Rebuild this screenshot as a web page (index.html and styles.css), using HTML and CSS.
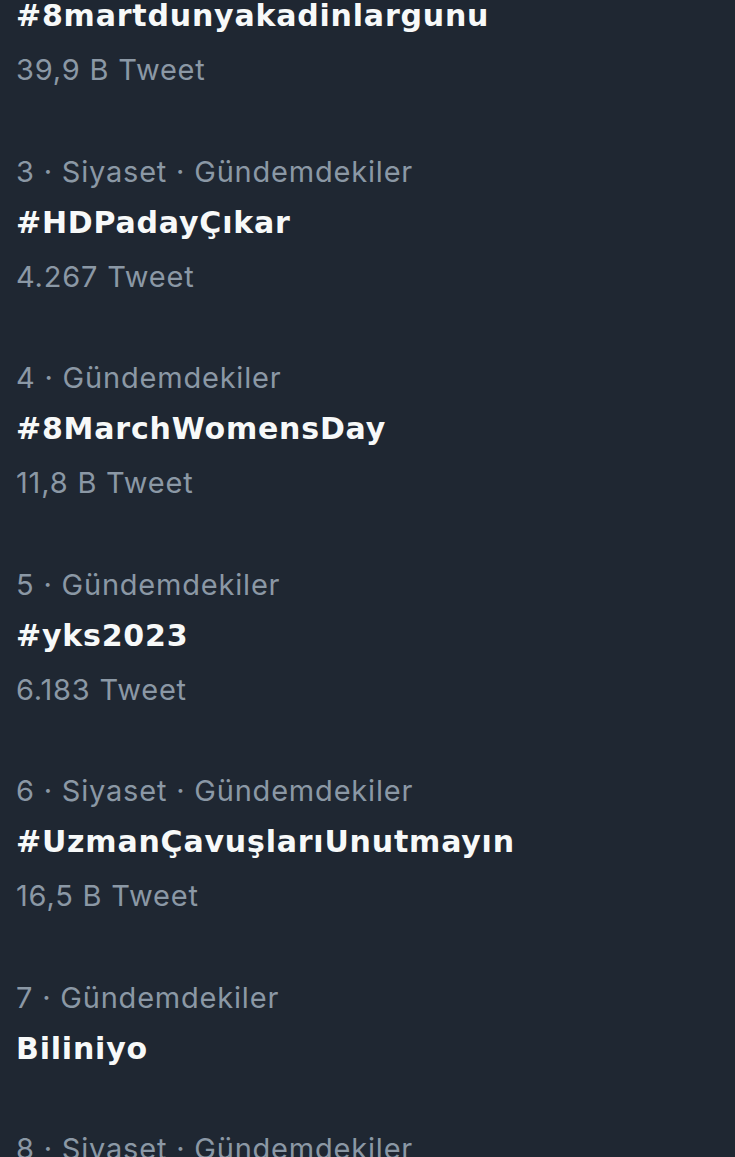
FILE: index.html
```html
<!DOCTYPE html>
<html lang="tr">
<head>
<meta charset="utf-8">
<title>Gündem</title>
<link rel="stylesheet" href="styles.css">
</head>
<body>
<main class="trends">
  <section class="trend">
    <div class="meta">2 · Gündemdekiler</div>
    <div class="title">#8martdunyakadinlargunu</div>
    <div class="count">39,9 B Tweet</div>
  </section>
  <section class="trend">
    <div class="meta">3 · Siyaset · Gündemdekiler</div>
    <div class="title">#HDPadayÇıkar</div>
    <div class="count">4.267 Tweet</div>
  </section>
  <section class="trend">
    <div class="meta">4 · Gündemdekiler</div>
    <div class="title">#8MarchWomensDay</div>
    <div class="count">11,8 B Tweet</div>
  </section>
  <section class="trend">
    <div class="meta">5 · Gündemdekiler</div>
    <div class="title">#yks2023</div>
    <div class="count">6.183 Tweet</div>
  </section>
  <section class="trend">
    <div class="meta">6 · Siyaset · Gündemdekiler</div>
    <div class="title">#UzmanÇavuşlarıUnutmayın</div>
    <div class="count">16,5 B Tweet</div>
  </section>
  <section class="trend">
    <div class="meta">7 · Gündemdekiler</div>
    <div class="title">Biliniyo</div>
  </section>
  <section class="trend">
    <div class="meta">8 · Siyaset · Gündemdekiler</div>
    <div class="title">#Gündem</div>
    <div class="count">10 B Tweet</div>
  </section>
</main>
</body>
</html>
```

FILE: styles.css
```css
html, body {
  margin: 0;
  padding: 0;
  background: #1f2732;
  overflow: hidden;
}
body {
  font-family: Inter, "Open Sans", "Liberation Sans", sans-serif;
  width: 735px;
  height: 1157px;
}
.trends {
  display: flex;
  flex-direction: column;
  margin-top: -86px;
}
.trend {
  display: flex;
  flex-direction: column;
  padding: 25px 16px 24.5px;
}
.meta, .count {
  color: #8b98a5;
  font-size: 29px;
  line-height: 52px;
  font-weight: 400;
  letter-spacing: 0.8px;
  white-space: nowrap;
}
.count {
  margin-top: 3px;
}
.title {
  color: #f7f9f9;
  font-family: "DejaVu Sans", Inter, sans-serif;
  font-size: 30px;
  line-height: 50px;
  font-weight: 700;
  letter-spacing: 0.8px;
  white-space: nowrap;
}
```
